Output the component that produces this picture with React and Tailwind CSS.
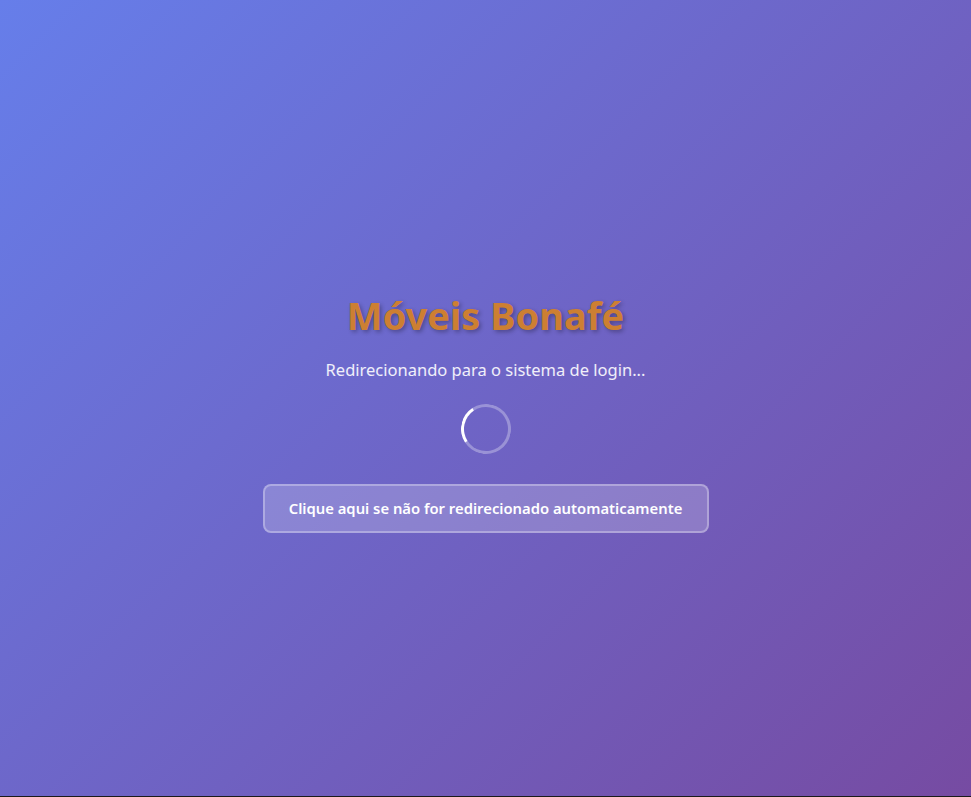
export default function App() {
  return (
    <div className="w-full" style={{ fontFamily: '"Noto Sans", "Open Sans", sans-serif' }}>
      <div className="h-[796px] w-full bg-[linear-gradient(135deg,#667eea_0%,#764ba2_100%)] flex flex-col items-center justify-center">
        <div className="flex flex-col items-center pt-[28px]">
          <h1 className="text-[38px] leading-[46px] font-bold text-[#cd7f32] [text-shadow:2px_2px_4px_rgba(0,0,0,0.3)]">
            Móveis Bonafé
          </h1>
          <p className="mt-[20px] text-[16.5px] leading-[24px] text-white/90">
            Redirecionando para o sistema de login...
          </p>
          <div className="mt-[22px] w-[50px] h-[50px] rounded-full border-[3px] border-white/30 border-l-white rotate-[12deg]" />
          <button className="mt-[30px] px-[24px] w-[446px] h-[49px] rounded-[8px] border-2 border-white/30 bg-white/20 text-white text-[14.8px] font-semibold">
            Clique aqui se não for redirecionado automaticamente
          </button>
        </div>
      </div>
      <div className="h-px w-full bg-[#1a1a1a]" />
    </div>
  );
}
